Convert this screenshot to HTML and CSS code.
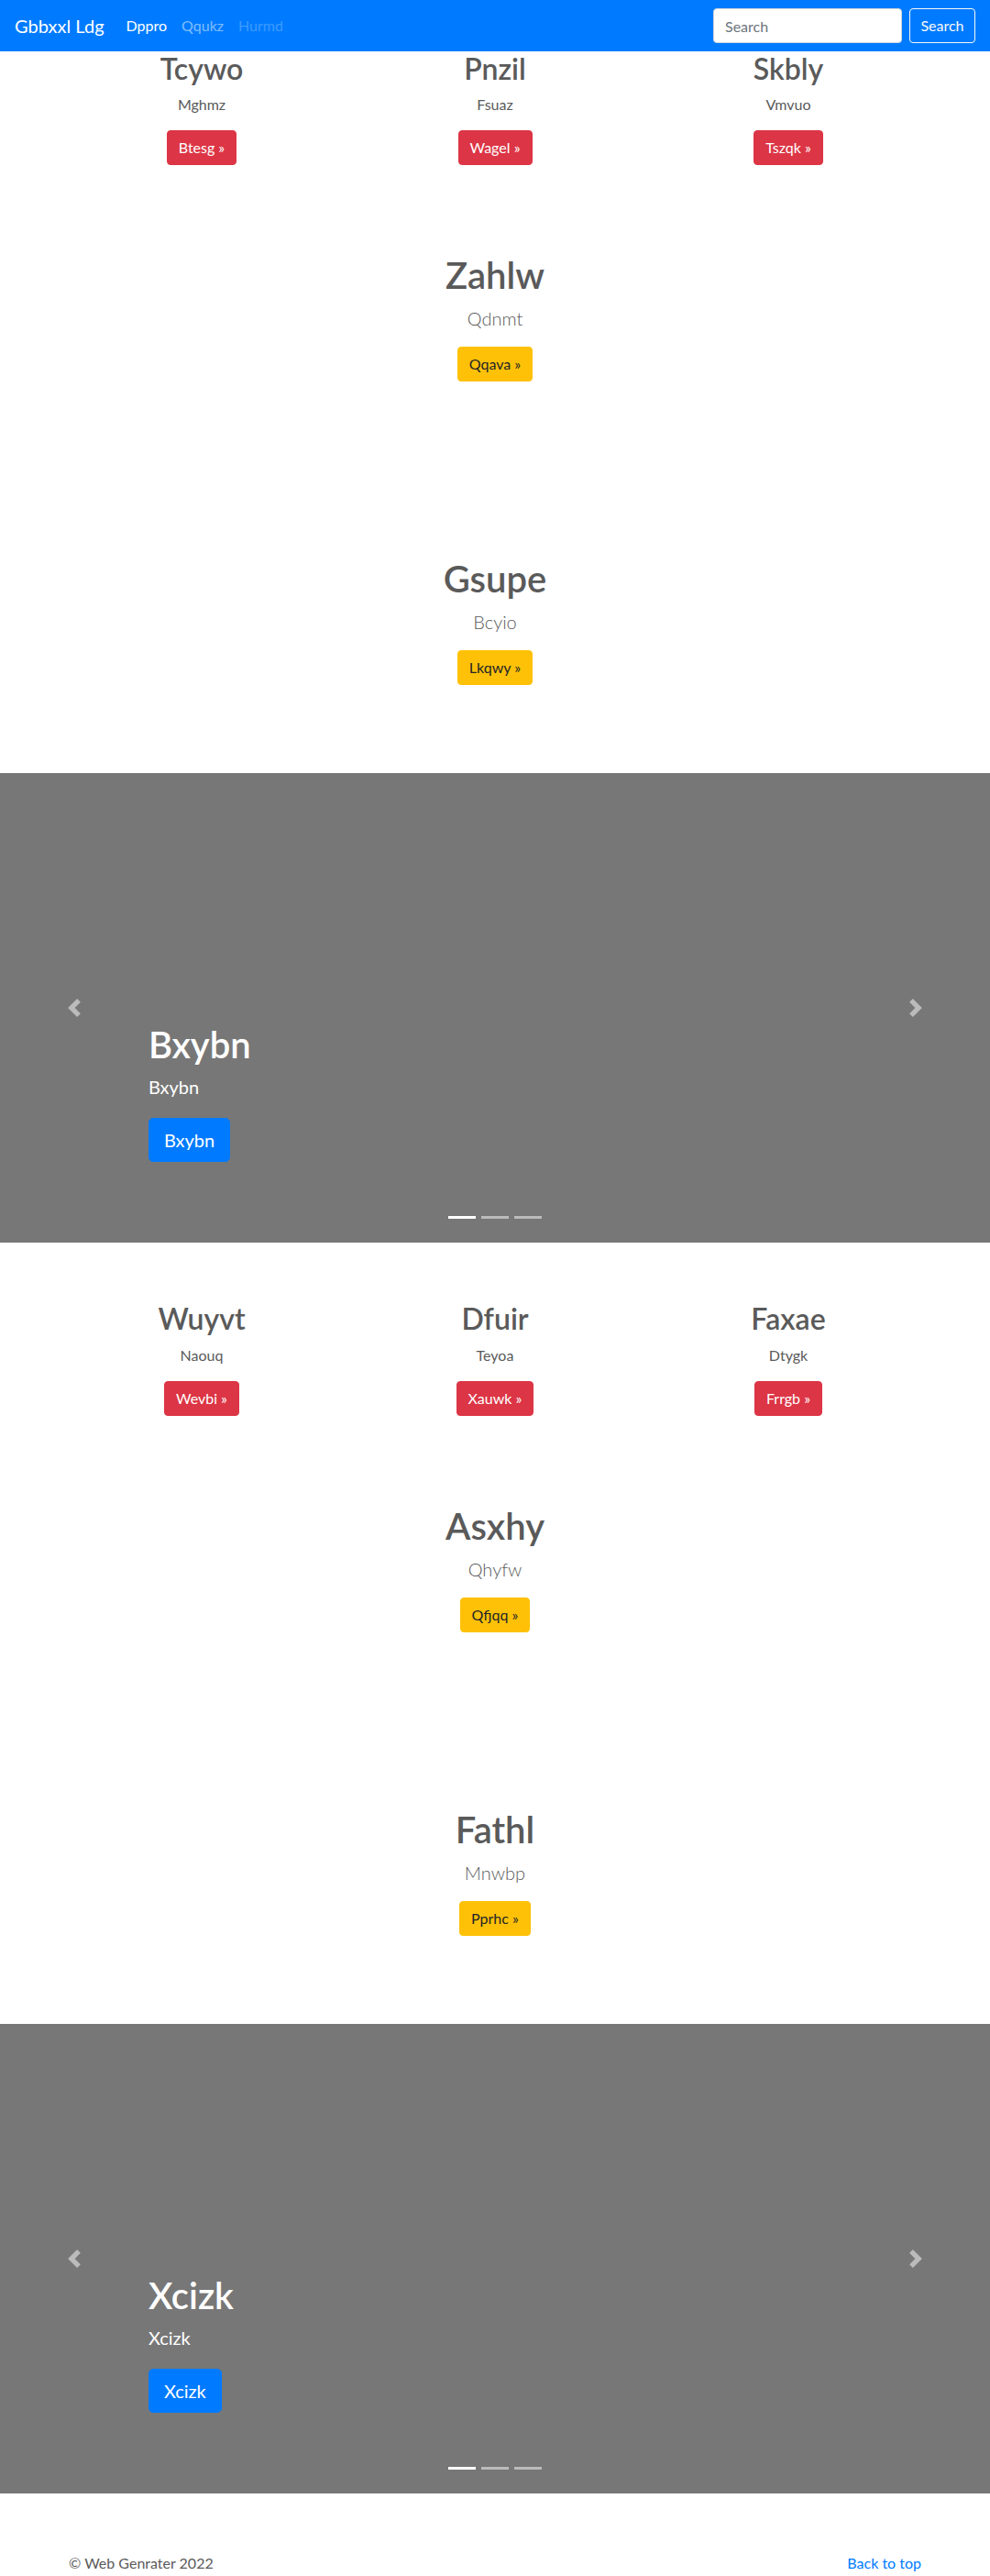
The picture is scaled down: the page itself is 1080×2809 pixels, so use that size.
FILE: index.html
```html
<!DOCTYPE html>
<html lang="en">
<head>
<meta charset="utf-8">
<title>Gbbxxl Ldg</title>
<link rel="stylesheet" href="styles.css">
</head>
<body>
<nav class="navbar">
  <a class="brand" href="#">Gbbxxl Ldg</a>
  <ul class="nav">
    <li><a class="active" href="#">Dppro</a></li>
    <li><a href="#">Qqukz</a></li>
    <li><a class="disabled" href="#">Hurmd</a></li>
  </ul>
  <form class="search">
    <input class="search-input" type="text" placeholder="Search">
    <button class="search-btn" type="button">Search</button>
  </form>
</nav>

<main>
  <section class="group">
    <div class="cols">
      <div class="col"><h2>Tcywo</h2><p>Mghmz</p><p class="btn-wrap"><a class="btn btn-danger" href="#">Btesg »</a></p></div>
      <div class="col"><h2>Pnzil</h2><p>Fsuaz</p><p class="btn-wrap"><a class="btn btn-danger" href="#">Wagel »</a></p></div>
      <div class="col"><h2>Skbly</h2><p>Vmvuo</p><p class="btn-wrap"><a class="btn btn-danger" href="#">Tszqk »</a></p></div>
    </div>
    <div class="feature"><h1>Zahlw</h1><p class="lead">Qdnmt</p><p class="btn-wrap"><a class="btn btn-warning" href="#">Qqava »</a></p></div>
    <div class="feature"><h1>Gsupe</h1><p class="lead">Bcyio</p><p class="btn-wrap"><a class="btn btn-warning" href="#">Lkqwy »</a></p></div>
  </section>

  <div class="carousel">
    <ol class="indicators"><li class="on"></li><li></li><li></li></ol>
    <div class="caption">
      <h1>Bxybn</h1>
      <p>Bxybn</p>
      <p class="cap-btn"><a class="btn btn-lg btn-primary" href="#">Bxybn</a></p>
    </div>
    <a class="control prev" href="#"><svg viewBox="0 0 8 8" width="20" height="20"><path fill="#fff" d="M5.25 0l-4 4 4 4 1.5-1.5L4.25 4l2.5-2.5L5.25 0z"/></svg></a>
    <a class="control next" href="#"><svg viewBox="0 0 8 8" width="20" height="20"><path fill="#fff" d="M2.75 0l-1.5 1.5L3.75 4l-2.5 2.5L2.75 8l4-4-4-4z"/></svg></a>
  </div>

  <section class="group">
    <div class="cols">
      <div class="col"><h2>Wuyvt</h2><p>Naouq</p><p class="btn-wrap"><a class="btn btn-danger" href="#">Wevbi »</a></p></div>
      <div class="col"><h2>Dfuir</h2><p>Teyoa</p><p class="btn-wrap"><a class="btn btn-danger" href="#">Xauwk »</a></p></div>
      <div class="col"><h2>Faxae</h2><p>Dtygk</p><p class="btn-wrap"><a class="btn btn-danger" href="#">Frrgb »</a></p></div>
    </div>
    <div class="feature"><h1>Asxhy</h1><p class="lead">Qhyfw</p><p class="btn-wrap"><a class="btn btn-warning" href="#">Qfjqq »</a></p></div>
    <div class="feature"><h1>Fathl</h1><p class="lead">Mnwbp</p><p class="btn-wrap"><a class="btn btn-warning" href="#">Pprhc »</a></p></div>
  </section>

  <div class="carousel">
    <ol class="indicators"><li class="on"></li><li></li><li></li></ol>
    <div class="caption">
      <h1>Xcizk</h1>
      <p>Xcizk</p>
      <p class="cap-btn"><a class="btn btn-lg btn-primary" href="#">Xcizk</a></p>
    </div>
    <a class="control prev" href="#"><svg viewBox="0 0 8 8" width="20" height="20"><path fill="#fff" d="M5.25 0l-4 4 4 4 1.5-1.5L4.25 4l2.5-2.5L5.25 0z"/></svg></a>
    <a class="control next" href="#"><svg viewBox="0 0 8 8" width="20" height="20"><path fill="#fff" d="M2.75 0l-1.5 1.5L3.75 4l-2.5 2.5L2.75 8l4-4-4-4z"/></svg></a>
  </div>
</main>

<footer class="footer">
  <p>© Web Genrater 2022</p>
  <p><a href="#">Back to top</a></p>
</footer>
</body>
</html>
```

FILE: styles.css
```css
* { box-sizing: border-box; }

body {
  margin: 0;
  font-family: Lato, "Open Sans", "Noto Sans", sans-serif;
  font-size: 16px;
  line-height: 1.5;
  color: #5a5a5a;
  background: #fff;
}

a { text-decoration: none; }

/* Navbar */
.navbar {
  height: 56px;
  background: #007bff;
  display: flex;
  align-items: center;
  padding: 8px 16px;
}
.brand {
  font-size: 20px;
  line-height: 30px;
  padding: 5px 0;
  margin-right: 16px;
  color: #fff;
}
.nav {
  display: flex;
  list-style: none;
  margin: 0;
  padding: 0;
  flex: 1;
}
.nav a {
  display: block;
  padding: 8px;
  line-height: 24px;
  color: rgba(255, 255, 255, 0.5);
}
.nav a.active { color: #fff; }
.nav a.disabled { color: rgba(255, 255, 255, 0.25); }

.search {
  display: flex;
  align-items: center;
  margin: 0;
}
.search-input {
  width: 206px;
  height: 38px;
  padding: 6px 12px;
  margin-right: 8px;
  font-family: inherit;
  font-size: 16px;
  line-height: 24px;
  color: #495057;
  background: #fff;
  border: 1px solid #ced4da;
  border-radius: 4px;
}
.search-input::placeholder { color: #6c757d; }
.search-btn {
  width: 72px;
  height: 38px;
  padding: 6px 0;
  font-family: inherit;
  font-size: 16px;
  line-height: 24px;
  color: #f8f9fa;
  background: transparent;
  border: 1px solid #f8f9fa;
  border-radius: 4px;
}

/* Buttons */
.btn {
  display: inline-block;
  padding: 6px 12px;
  font-size: 16px;
  line-height: 24px;
  border: 1px solid transparent;
  border-radius: 4px;
  font-weight: 400;
}
.btn-danger { background: #dc3545; border-color: #dc3545; color: #fff; }
.btn-warning { background: #ffc107; border-color: #ffc107; color: #212529; }
.btn-primary { background: #007bff; border-color: #007bff; color: #fff; }
.btn-lg {
  padding: 8px 16px;
  font-size: 20px;
  line-height: 30px;
  border-radius: 5px;
}

.btn-wrap {
  display: flex;
  justify-content: center;
  margin: 0 0 16px;
}

/* Groups */
.cols {
  width: 960px;
  margin: 0 auto;
  display: grid;
  grid-template-columns: repeat(3, 1fr);
}
.col {
  padding: 0 15px;
  text-align: center;
}
.col h2 {
  margin: 0 0 8px;
  font-size: 32px;
  line-height: 38.4px;
  font-weight: 600;
}
.col p { margin: 0 0 16px; }

.feature {
  padding: 80px 0;
  text-align: center;
}
.feature + .feature { margin-top: 15px; }
.feature h1 {
  margin: 0 0 8px;
  font-size: 40px;
  line-height: 48px;
  font-weight: 600;
}
.lead {
  margin: 0 0 16px;
  font-size: 20px;
  line-height: 30px;
  font-weight: 300;
}

/* Carousel */
.carousel {
  position: relative;
  height: 512px;
  background: #777;
  margin-bottom: 64px;
}
.caption {
  position: absolute;
  left: 15%;
  right: 15%;
  bottom: 48px;
  padding: 20px 0;
  color: #fff;
  text-align: left;
  z-index: 2;
}
.caption h1 {
  margin: 0 0 8px;
  font-size: 40px;
  line-height: 48px;
  font-weight: 600;
}
.caption p {
  margin: 0 0 20px;
  font-size: 20px;
  line-height: 28px;
}
.caption .cap-btn { display: flex; }

.control {
  position: absolute;
  top: 0;
  bottom: 0;
  width: 15%;
  display: flex;
  align-items: center;
  justify-content: center;
  opacity: 0.5;
}
.control.prev { left: 0; }
.control.next { right: 0; }
.control svg { display: block; }

.indicators {
  position: absolute;
  left: 0;
  right: 0;
  bottom: 0;
  margin: 0 0 16px;
  padding: 0;
  list-style: none;
  display: flex;
  justify-content: center;
  z-index: 3;
}
.indicators li {
  width: 30px;
  height: 3px;
  margin: 10px 3px;
  background: rgba(255, 255, 255, 0.5);
}
.indicators li.on { background: #fff; }

/* Footer */
.footer {
  width: 960px;
  margin: 0 auto;
  padding: 0 15px;
  display: flex;
  justify-content: space-between;
}
.footer p { margin: 0 0 16px; }
.footer a { color: #007bff; }
```
